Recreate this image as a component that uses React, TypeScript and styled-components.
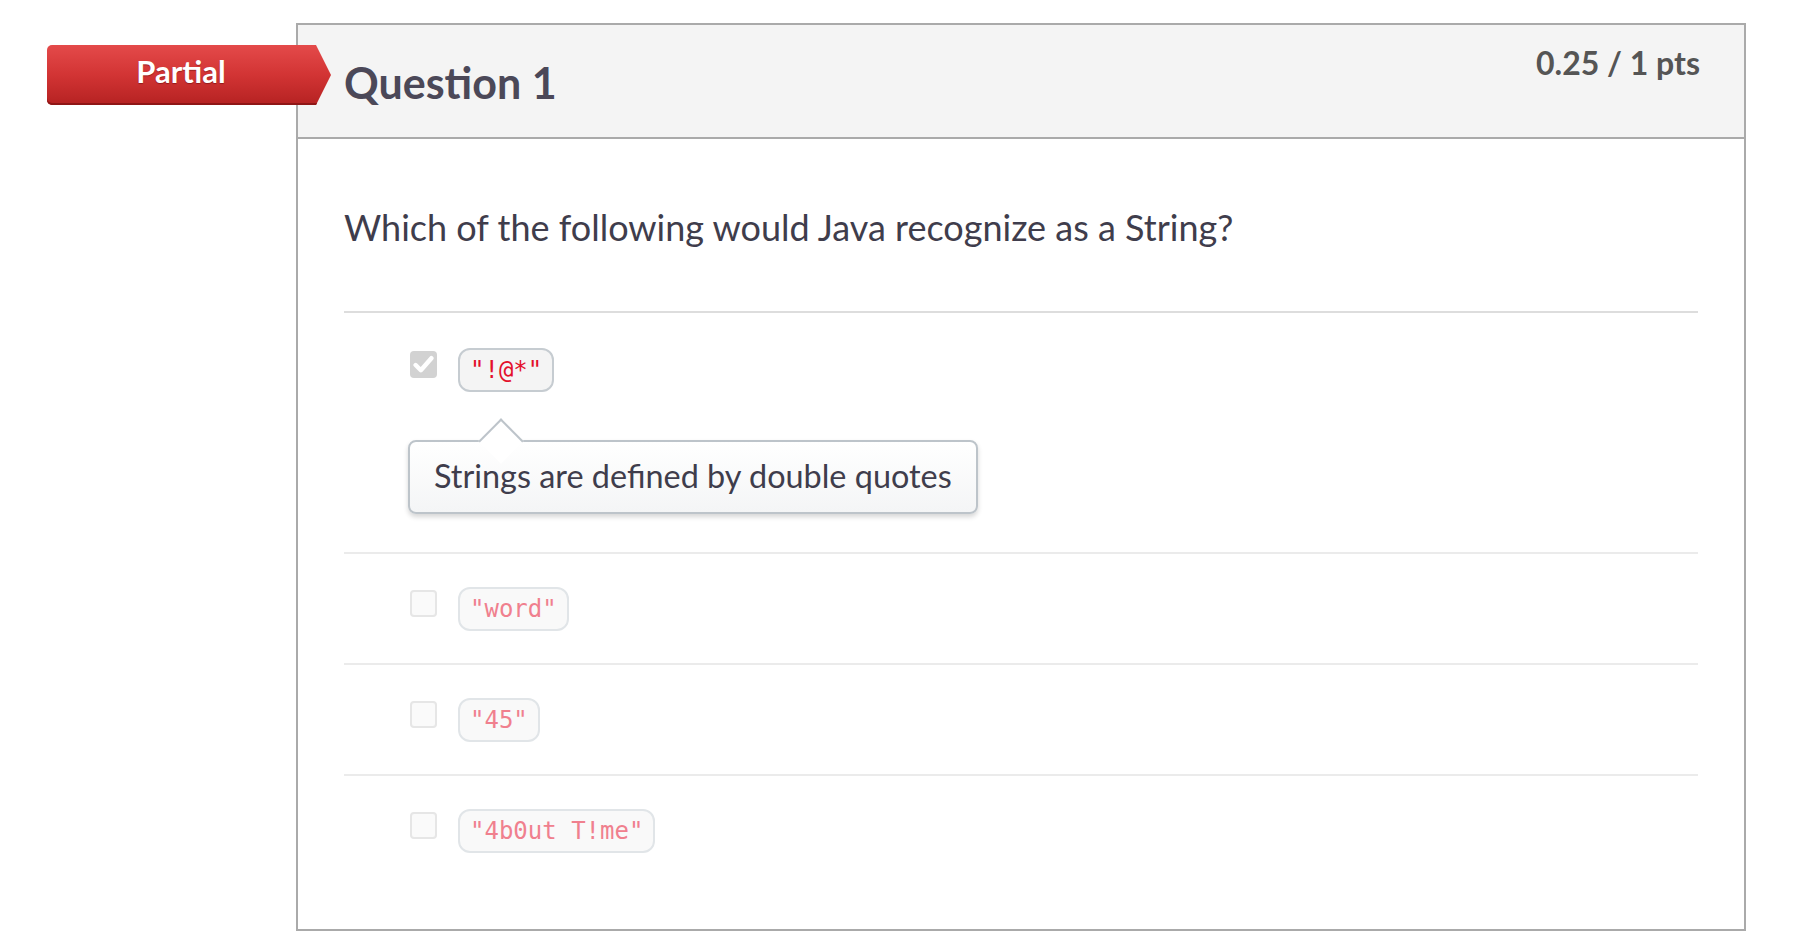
import React from "react";
import styled, { createGlobalStyle } from "styled-components";

const GlobalStyle = createGlobalStyle`
  html, body { margin: 0; padding: 0; background: #ffffff; }
  body { font-family: Lato, "Open Sans", "Liberation Sans", sans-serif; color: #3f3d4c; }
  * { box-sizing: border-box; }
`;

const Page = styled.main`
  padding: 23px 0 0 296px;
`;

const QuizItem = styled.div`
  position: relative;
  width: 1450px;
`;

const Badge = styled.div`
  position: absolute;
  left: -249px;
  top: 22px;
  width: 284px;
  height: 60px;
  padding: 0 16px 7px 0;
  display: flex;
  align-items: center;
  justify-content: center;
  border-radius: 5px 0 0 5px;
  background: linear-gradient(to bottom, #e44a4a 0%, #d23434 50%, #b52222 100%);
  box-shadow: inset 0 -2px 0 #8f1616;
  clip-path: polygon(0 0, calc(100% - 15px) 0, 100% 50%, calc(100% - 15px) 100%, 0 100%);
  color: #ffffff;
  font-weight: 700;
  font-size: 31px;
  line-height: 1;
  text-shadow: 0 1px 1px rgba(80, 0, 0, 0.45);
  z-index: 2;
`;

const Panel = styled.section`
  border: 2px solid #aaaaaa;
  background: #ffffff;
`;

const Header = styled.header`
  display: flex;
  justify-content: space-between;
  align-items: flex-start;
  height: 114px;
  padding: 0 44px 0 46px;
  background: #f4f4f4;
  border-bottom: 2px solid #aaaaaa;
`;

const Title = styled.h2`
  margin: 36px 0 0;
  font-size: 43px;
  line-height: 1;
  font-weight: 700;
  color: #4b4858;
`;

const Points = styled.div`
  margin-top: 22px;
  font-size: 32px;
  line-height: 1;
  font-weight: 700;
  color: #555555;
`;

const Body = styled.div`
  padding: 70px 46px 44px;
`;

const QuestionText = styled.p`
  margin: 0 0 66px;
  font-size: 36px;
  line-height: 1;
  color: #3f3d4c;
`;

const AnswerList = styled.div`
  border-top: 2px solid #dddddd;
`;

const AnswerRow = styled.div`
  padding: 33px 0 32px 66px;
  &:first-child { padding-top: 35px; }
  & + & { border-top: 2px solid #ebebeb; }
`;

const AnswerLine = styled.div`
  display: flex;
  align-items: flex-start;
  gap: 21px;
`;

const Checkbox = styled.span<{ $checked?: boolean }>`
  flex: none;
  width: 27px;
  height: 27px;
  margin-top: 3px;
  border-radius: 4px;
  display: flex;
  align-items: center;
  justify-content: center;
  background: ${(p) => (p.$checked ? "#d2d2d2" : "#fafafa")};
  border: ${(p) => (p.$checked ? "none" : "2px solid #e6e6e6")};
`;

const CodePill = styled.code<{ $muted?: boolean }>`
  display: inline-flex;
  align-items: center;
  height: 44px;
  padding: 0 10px;
  border-radius: 12px;
  border: 2px solid ${(p) => (p.$muted ? "#e1e5e8" : "#c6ccd1")};
  background: ${(p) => (p.$muted ? "#f9f9f9" : "#f4f4f4")};
  color: ${(p) => (p.$muted ? "#f0808e" : "#e3102c")};
  font-family: "DejaVu Sans Mono", "Liberation Mono", monospace;
  font-size: 24px;
  white-space: pre;
`;

const Comment = styled.div`
  position: relative;
  width: fit-content;
  margin: 48px 0 6px -2px;
  padding: 15px 24px 17px;
  border: 2px solid #bdc4ca;
  border-radius: 8px;
  background: linear-gradient(to bottom, #ffffff 0%, #f4f5f6 100%);
  box-shadow: 0 3px 5px rgba(0, 0, 0, 0.16);
  font-size: 32.4px;
  line-height: 38px;
  color: #3f3d4c;

  &::before {
    content: "";
    position: absolute;
    left: 75px;
    top: -17px;
    width: 30px;
    height: 30px;
    background: #ffffff;
    border-top: 2px solid #bdc4ca;
    border-left: 2px solid #bdc4ca;
    transform: rotate(45deg);
  }
`;

const CheckIcon = () => (
  <svg width="21" height="19" viewBox="0 0 20 18" aria-hidden="true">
    <path d="M2.5 9.5 L7.5 14.5 L17.5 3" fill="none" stroke="#ffffff" strokeWidth="4.2" strokeLinecap="round" strokeLinejoin="round" />
  </svg>
);

type Answer = { code: string; checked: boolean; comment?: string };

const answers: Answer[] = [
  { code: '"!@*"', checked: true, comment: "Strings are defined by double quotes" },
  { code: '"word"', checked: false },
  { code: '"45"', checked: false },
  { code: '"4b0ut T!me"', checked: false },
];

export default function App() {
  return (
    <>
      <GlobalStyle />
      <Page>
        <QuizItem>
          <Badge>Partial</Badge>
          <Panel>
            <Header>
              <Title>Question 1</Title>
              <Points>0.25 / 1 pts</Points>
            </Header>
            <Body>
              <QuestionText>Which of the following would Java recognize as a String?</QuestionText>
              <AnswerList>
                {answers.map((a) => (
                  <AnswerRow key={a.code}>
                    <AnswerLine>
                      <Checkbox $checked={a.checked}>{a.checked && <CheckIcon />}</Checkbox>
                      <CodePill $muted={!a.checked}>{a.code}</CodePill>
                    </AnswerLine>
                    {a.comment && <Comment>{a.comment}</Comment>}
                  </AnswerRow>
                ))}
              </AnswerList>
            </Body>
          </Panel>
        </QuizItem>
      </Page>
    </>
  );
}
